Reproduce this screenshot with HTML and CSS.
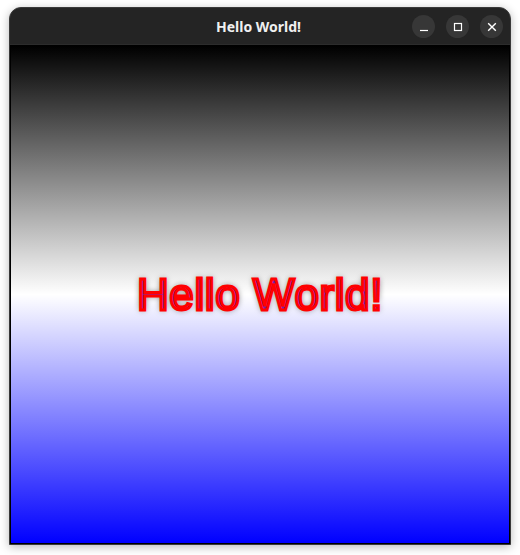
FILE: index.html
```html
<!DOCTYPE html>
<html>
<head>
<meta charset="utf-8">
<link rel="stylesheet" href="styles.css">
</head>
<body>
<div class="window">
  <div class="titlebar">
    <div class="title">Hello World!</div>
    <div class="controls">
      <div class="btn"><svg width="10" height="10" viewBox="0 0 10 10"><path d="M1 8.5H9" stroke="#fff" stroke-width="1.2"/></svg></div>
      <div class="btn"><svg width="10" height="10" viewBox="0 0 10 10"><rect x="1.5" y="1.5" width="7" height="7" fill="none" stroke="#fff" stroke-width="1.2"/></svg></div>
      <div class="btn"><svg width="10" height="10" viewBox="0 0 10 10"><path d="M1.2 1.2L8.8 8.8M8.8 1.2L1.2 8.8" stroke="#fff" stroke-width="1.4"/></svg></div>
    </div>
  </div>
  <div class="content">
    <div class="hello">Hello World!</div>
  </div>
</div>
</body>
</html>
```
FILE: styles.css
```css
html, body {
  margin: 0;
  padding: 0;
  background: #ffffff;
}
body {
  width: 520px;
  height: 555px;
  overflow: hidden;
}
.window {
  margin: 7px 0 0 9px;
  width: 500px;
  height: 536px;
  border: 1px solid #3a3a3a;
  border-radius: 12px 12px 0 0;
  background: #242424;
  display: flex;
  flex-direction: column;
  box-shadow: 0 2px 10px rgba(0,0,0,0.28);
}
.titlebar {
  height: 36px;
  flex: none;
  position: relative;
  display: flex;
  align-items: center;
  justify-content: center;
  border-bottom: 1px solid #2c2c2c;
  border-radius: 11px 11px 0 0;
}
.title {
  font-family: "Noto Sans", "DejaVu Sans", sans-serif;
  font-weight: 700;
  font-size: 14px;
  color: #f0f0f0;
  margin-right: 3px;
}
.controls {
  position: absolute;
  right: 7px;
  top: 7px;
  display: flex;
  gap: 11px;
}
.btn {
  width: 23px;
  height: 23px;
  border-radius: 50%;
  background: #373737;
  display: flex;
  align-items: center;
  justify-content: center;
}
.content {
  flex: 1;
  border: 1px solid #000;
  background: linear-gradient(to bottom, #000000 0%, #ffffff 50%, #0000ff 100%);
  display: flex;
  align-items: center;
  justify-content: center;
}
.hello {
  font-family: "Liberation Sans", Arial, sans-serif;
  font-size: 44px;
  letter-spacing: 0.6px;
  color: #7020b0;
  -webkit-text-stroke: 3px #ff0000;
  text-shadow: 0 0 6px rgba(0,0,0,0.65);
  margin-top: 1px;
}
```
